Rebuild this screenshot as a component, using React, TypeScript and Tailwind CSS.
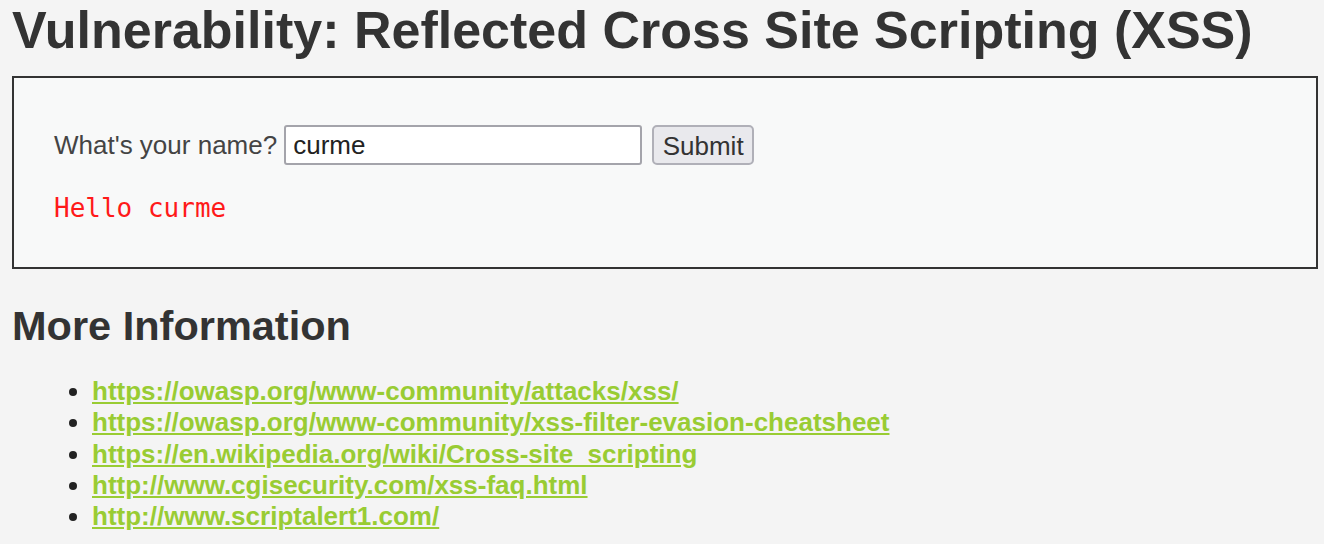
export default function App() {
  const links = [
    'https://owasp.org/www-community/attacks/xss/',
    'https://owasp.org/www-community/xss-filter-evasion-cheatsheet',
    'https://en.wikipedia.org/wiki/Cross-site_scripting',
    'http://www.cgisecurity.com/xss-faq.html',
    'http://www.scriptalert1.com/',
  ];

  return (
    <div className="min-h-[544px] bg-[#f4f4f4] px-3 pt-px text-[#333] font-['Liberation_Sans',Arial,sans-serif]">
      <h1 className="text-[52px] leading-[58px] font-bold">
        Vulnerability: Reflected Cross Site Scripting (XSS)
      </h1>

      {/* Form box */}
      <div className="mt-[17px] h-[193px] w-[1306px] border-2 border-[#333] bg-[#f8f9f9] px-10 pt-[47px]">
        <div className="flex items-center text-[26px] text-[#444]">
          <span>What's your name?</span>
          <input
            readOnly
            value="curme"
            className="ml-[7px] h-10 w-[358px] rounded-[3px] border-2 border-[#a4a4ab] bg-white px-[7px] text-[26px] text-[#222] outline-none"
          />
          <button className="ml-[10px] h-10 w-[102px] rounded-[5px] border-2 border-[#b0b0b8] bg-[#e9e9ed] text-[26px] text-[#333]">
            Submit
          </button>
        </div>
        <pre className="mt-7 text-[26px] leading-[30px] text-[#ff1a1a] font-['DejaVu_Sans_Mono',monospace]">
          Hello curme
        </pre>
      </div>

      <h2 className="mt-[34px] text-[41.5px] leading-[46px] font-bold">More Information</h2>

      <ul className="mt-[27px] list-disc pl-[80px] text-[26px] leading-[31.3px] marker:text-[#222]">
        {links.map((href) => (
          <li key={href}>
            <a href={href} className="font-bold text-[#99cc33] underline">
              {href}
            </a>
          </li>
        ))}
      </ul>
    </div>
  );
}
